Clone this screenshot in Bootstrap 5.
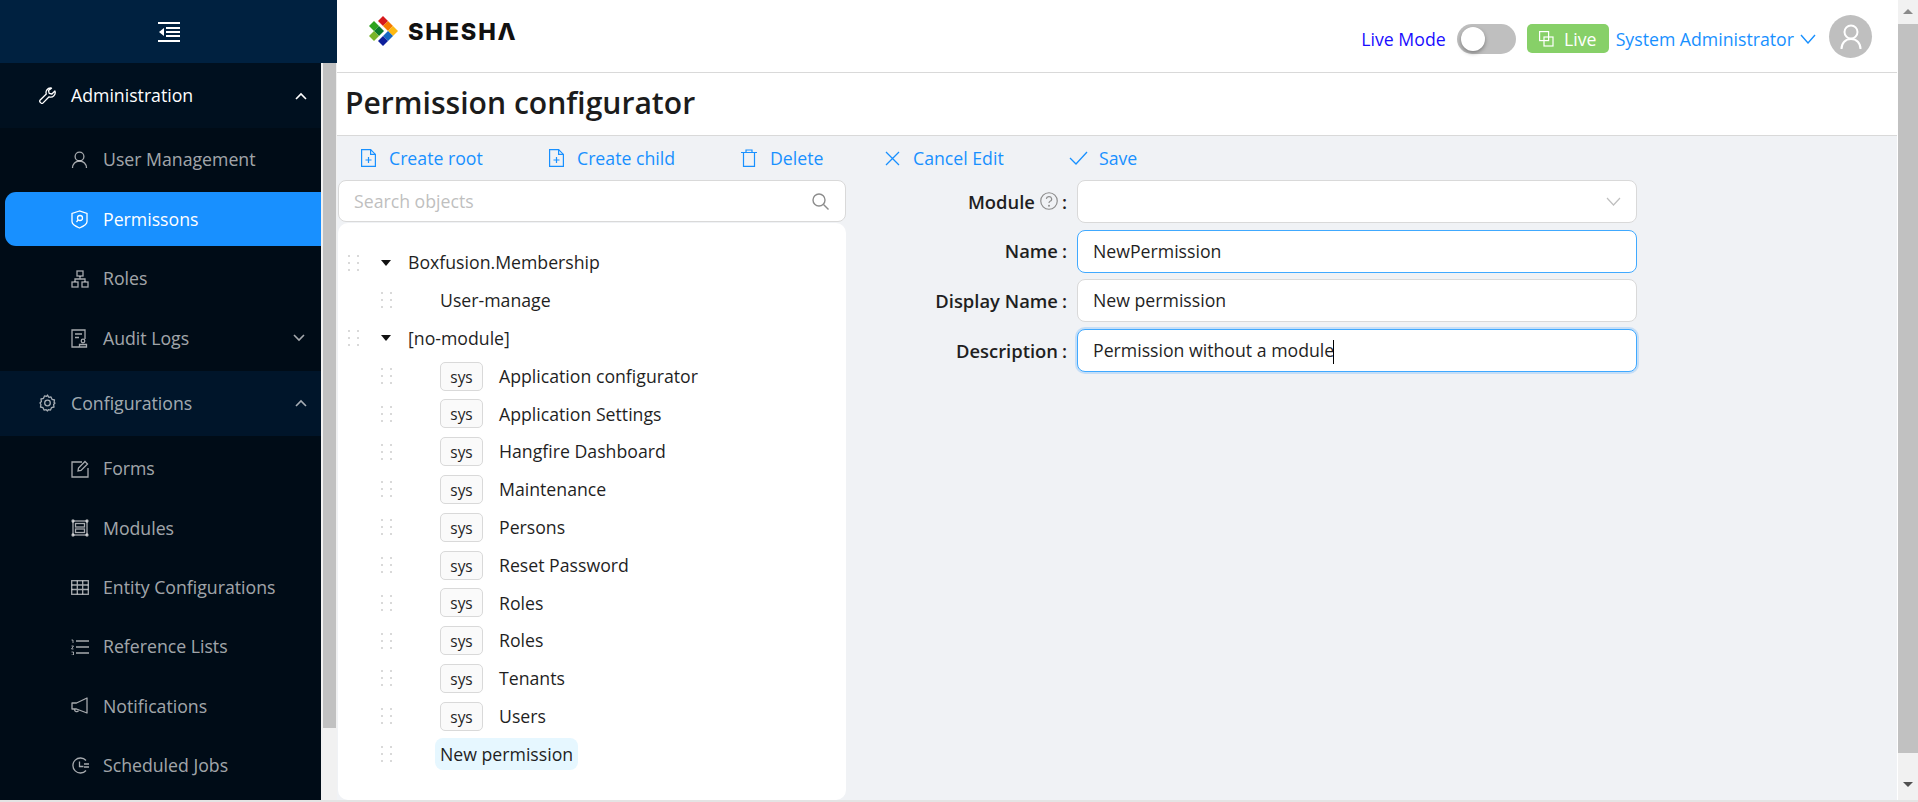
<!DOCTYPE html>
<html lang="en"><head><meta charset="utf-8"><title>Permission configurator</title>
<link href="https://cdn.jsdelivr.net/npm/bootstrap@5.3.0/dist/css/bootstrap.min.css" rel="stylesheet">
<style>
html,body{height:802px;overflow:hidden;}
body{font-family:"Open Sans","Noto Sans",sans-serif;font-size:17.7px;background:#f0f2f5;color:#1f1f1f;}
svg{display:block;flex:none;}
.shell{height:800px;}
.strip{height:2px;background:#e4e4e4;}
.side{width:321px;background:#000c17;color:rgba(255,255,255,.65);}
.side-top{height:63px;background:#002140;padding-left:16px;}
.side-title{height:65px;padding-left:39px;padding-right:14px;background:#00152a;gap:14px;}
.side-title.open{background:#00101f;color:#fff;}
.side-sub{padding-top:6px;padding-bottom:6px;gap:5.3px;}
.side-sub.first{padding-top:4.6px;padding-bottom:5.6px;gap:5.5px;}
.side-item{height:54px;margin-left:5px;padding-left:66px;gap:14px;border-radius:11px 0 0 11px;}
.side-item.on{background:#1890ff;color:#fff;}
.w17{margin-right:1px;}
.sbar{width:16px;background:#f1f1f1;}
.sbar-cap{height:63px;background:#002140;}
.sbar-thumb{width:13px;height:665px;margin-left:2px;background:#c1c1c1;}
.work{min-width:0;}
.top{height:73px;background:#fff;border-bottom:1px solid #d9d9d9;padding-left:31px;padding-right:25px;}
.brand-wrap{margin-bottom:9px;}
.right-wrap{padding-top:6px;margin-left:auto;}
.brand{font-family:Inter,sans-serif;font-weight:800;font-size:23.5px;letter-spacing:1.8px;color:#111;line-height:1;margin-left:9px;}
.live-label{color:#1a0dff;}
.knob-track{width:59px;height:30px;border-radius:15px;background:#bfbfbf;padding:3px 4px;margin:0 11px;}
.knob-track i{display:block;width:24px;height:24px;border-radius:50%;background:#fff;box-shadow:0 2px 4px rgba(0,0,0,.35);}
.live-tag{width:82px;height:29px;background:#87d068;color:#fff;border-radius:5px;gap:10px;}
.user-name{color:#1890ff;margin-left:7px;margin-right:13px;gap:6px;}
.avatar{width:43px;height:43px;border-radius:50%;background:#bfbfbf;margin-top:-4px;}
.head-title{height:64px;background:#fff;border-bottom:1px solid #d9d9d9;padding:0 0 2px 8px;font-size:30.1px;font-weight:600;color:#1c1c1c;}
.tools{height:44px;color:#1890ff;padding-left:24px;}
.tool{gap:13px;}
.tool.tight{gap:11px;}
.tool-a{width:188px;} .tool-b{width:192px;} .tool-c{width:144px;} .tool-d{width:184px;}
.left-col{width:508px;margin-left:1px;}
.search-box{height:42px;border:1px solid #d9d9d9;border-radius:8px;background:#fff;padding:0 16px 0 15px;color:#bfbfbf;margin-bottom:1px;}
.tree{height:577px;background:#fff;border-radius:10px;padding-top:20.8px;}
.tree-row{height:37.8px;}
.tree-row.root{padding-left:10px;}
.tree-row.leaf{padding-left:43px;}
.caret-dn{width:0;height:0;border-left:5px solid transparent;border-right:5px solid transparent;border-top:6px solid #111;margin-left:22px;margin-right:17px;}
.leaf .grip{margin-right:48px;}
.sys-tag{width:43px;height:29px;line-height:29px;text-align:center;border:1px solid #d9d9d9;border-radius:5px;background:#fafafa;margin-right:16px;font-size:15.4px;}
.picked{height:32px;line-height:32px;background:#e6f7ff;border-radius:8px;padding:0 5px;margin-left:-5px;}
.f-row{margin-bottom:6.7px;}
.f-label{width:231px;padding-right:10px;font-size:18.4px;font-weight:600;text-align:right;margin:0;}
.f-help{margin-left:5px;}
.form-control.f-input{width:560px;height:43px;border:1px solid #d9d9d9;border-radius:8px;padding:0 15px;font-size:inherit;color:#1f1f1f;background:#fff;line-height:41px;}
.form-control.f-input.hot{border-color:#40a9ff;}
.form-control.f-input.glow{border-color:#40a9ff;box-shadow:0 0 0 2px rgba(24,144,255,.2);}
.text-caret{display:inline-block;width:1px;height:24px;background:#000;vertical-align:middle;margin-left:-1px;}
.rbar{width:21px;background:#f1f1f1;border-left:1px solid #fff;}
.rbar .arrow-up{width:0;height:0;border-left:5px solid transparent;border-right:5px solid transparent;border-bottom:5px solid #8a8a8a;margin:9px auto 10px;}
.rbar .thumb{width:20px;height:729px;background:#c1c1c1;}
.rbar .arrow-dn{width:0;height:0;border-left:5px solid transparent;border-right:5px solid transparent;border-top:5px solid #505050;margin:29px auto 0;}
</style></head>
<body>
<svg width="0" height="0" class="position-absolute"><defs>
<g id="dots" fill="#d9d9d9"><rect width="2" height="2"/><rect x="9" width="2" height="2"/><rect y="7" width="2" height="2"/><rect x="9" y="7" width="2" height="2"/><rect y="14" width="2" height="2"/><rect x="9" y="14" width="2" height="2"/></g>
</defs></svg>
<div class="shell d-flex">
  <aside class="side flex-shrink-0 d-flex flex-column overflow-hidden">
    <div class="side-top d-flex align-items-center justify-content-center">
      <svg width="22" height="20" viewBox="0 0 22 20" fill="#fff"><rect x="0" y="0" width="22" height="2"/><rect x="8" y="5" width="14" height="2"/><rect x="8" y="9" width="14" height="2"/><rect x="8" y="13" width="14" height="2"/><rect x="0" y="18" width="22" height="2"/><path d="M1 10l5-4v8z"/></svg>
    </div>
    <div class="side-title open d-flex align-items-center">
      <svg class="w17" width="17" height="17" viewBox="0 0 17 17" fill="none" stroke="#fff" stroke-width="1.3" stroke-linejoin="round"><path d="M11.500 1a4.500 4.500 0 0 0-4.200 6L1.200 13a1.600 1.600 0 0 0 0 2.200l.7.7a1.600 1.600 0 0 0 2.200 0l6-6.100A4.500 4.500 0 0 0 15.900 4l-3 3-2.700-.7-.7-2.700 3-2.400z"/></svg>
      <span>Administration</span>
      <svg class="ms-auto" width="12" height="8" viewBox="0 0 12 8" fill="none" stroke="#fff" stroke-width="1.6"><path d="M1 7l5-5 5 5"/></svg>
    </div>
    <div class="side-sub first d-flex flex-column">
      <div class="side-item d-flex align-items-center">
        <svg class="w17" width="17" height="18" viewBox="0 0 17 18" fill="none" stroke="currentColor" stroke-width="1.3"><circle cx="8.5" cy="5.5" r="4.4"/><path d="M1.500 17c0-4 3-7 7-7s7 3 7 7"/></svg>
        <span>User Management</span>
      </div>
      <div class="side-item on d-flex align-items-center">
        <svg class="w17" width="17" height="19" viewBox="0 0 17 19" fill="none" stroke="currentColor" stroke-width="1.3"><path d="M8.500 1L1 3.400v8.200c0 2.400 4 5 7.500 6.400 3.500-1.400 7.500-4 7.500-6.400V3.400z"/><circle cx="9" cy="8" r="2.500"/><path d="M7 10l-1.500 2"/></svg>
        <span>Permissons</span>
      </div>
      <div class="side-item d-flex align-items-center">
        <svg width="18" height="18" viewBox="0 0 18 18" fill="none" stroke="currentColor" stroke-width="1.300"><rect x="6" y="1" width="6" height="5"/><rect x="1" y="12" width="6" height="5"/><rect x="11" y="12" width="6" height="5"/><path d="M9 6v3M4 12V9h10v3"/></svg>
        <span>Roles</span>
      </div>
      <div class="side-item d-flex align-items-center">
        <svg class="w17" width="17" height="19" viewBox="0 0 17 19" fill="none" stroke="currentColor" stroke-width="1.300"><path d="M8 18H1V1h13v9"/><path d="M4 5h7M4 8.500h4"/><circle cx="12" cy="12" r="1.800"/><path d="M8.500 18v-2.500h7V18z"/></svg>
        <span>Audit Logs</span>
        <svg class="ms-auto me-3" width="12" height="8" viewBox="0 0 12 8" fill="none" stroke="currentColor" stroke-width="1.600"><path d="M1 1l5 5 5-5"/></svg>
      </div>
    </div>
    <div class="side-title d-flex align-items-center">
      <svg class="w17" width="17" height="18" viewBox="0 0 17 18" fill="none" stroke="currentColor" stroke-width="1.300" stroke-linejoin="round"><path d="M8.500 1l1.300 2.300 2.200-.4 1 2.400 2.500.7-.4 2.500L16 9l-1.400 1.500.4 2.500-2.500.7-1 2.400-2.200-.4L8.500 17l-1.300-1.300-2.200.4-1-2.400-2.500-.7.4-2.500L1 9l1.400-1.500L2 5l2.500-.7 1-2.400 2.200.4z"/><circle cx="8.500" cy="9" r="2.800"/></svg>
      <span>Configurations</span>
      <svg class="ms-auto" width="12" height="8" viewBox="0 0 12 8" fill="none" stroke="currentColor" stroke-width="1.600"><path d="M1 7l5-5 5 5"/></svg>
    </div>
    <div class="side-sub d-flex flex-column">
      <div class="side-item d-flex align-items-center">
        <svg width="18" height="18" viewBox="0 0 18 18" fill="none" stroke="currentColor" stroke-width="1.300"><path d="M11 2H1v15h16V8"/><path d="M7 11l.5-3L14 1.500l2.500 2.500L10 10.500z"/></svg>
        <span>Forms</span>
      </div>
      <div class="side-item d-flex align-items-center">
        <svg width="18" height="18" viewBox="0 0 18 18" fill="none" stroke="currentColor" stroke-width="1.300"><rect x="2" y="2" width="14" height="14"/><rect x="4.500" y="4.500" width="9" height="3.500"/><rect x="4.500" y="10" width="9" height="3.500"/><circle cx="2" cy="2" r="1"/><circle cx="16" cy="2" r="1"/><circle cx="2" cy="16" r="1"/><circle cx="16" cy="16" r="1"/></svg>
        <span>Modules</span>
      </div>
      <div class="side-item d-flex align-items-center">
        <svg width="18" height="15" viewBox="0 0 18 15" fill="none" stroke="currentColor" stroke-width="1.300"><rect x=".7" y=".7" width="16.600" height="13.600"/><path d="M.7 5h16.600M.7 9.500h16.600M6.300.7v13.600M11.700.7v13.600"/></svg>
        <span>Entity Configurations</span>
      </div>
      <div class="side-item d-flex align-items-center">
        <svg width="18" height="16" viewBox="0 0 18 16" fill="none" stroke="currentColor" stroke-width="1.300"><path d="M5 2h13M5 8h13M5 14h13"/><path d="M.5 1h1.500v3M.5 7h2L.5 10h2M.5 13h2v3h-2" stroke-width=".9"/></svg>
        <span>Reference Lists</span>
      </div>
      <div class="side-item d-flex align-items-center">
        <svg class="w17" width="17" height="17" viewBox="0 0 17 17" fill="none" stroke="currentColor" stroke-width="1.300" stroke-linejoin="round"><path d="M16 1v15L5.500 12H1V6h4.500z"/><path d="M3.500 12.500a2.200 2.200 0 0 0 4 1.200"/></svg>
        <span>Notifications</span>
      </div>
      <div class="side-item d-flex align-items-center">
        <svg width="18" height="17" viewBox="0 0 18 17" fill="none" stroke="currentColor" stroke-width="1.300"><path d="M15 3.500A7.500 7.500 0 1 0 15 13.500"/><path d="M8.500 4.500v5h4M13 7h5M13 10h5"/></svg>
        <span>Scheduled Jobs</span>
      </div>
    </div>
  </aside>
  <div class="sbar flex-shrink-0"><div class="sbar-cap"></div><div class="sbar-thumb"></div></div>
  <main class="work flex-grow-1 d-flex flex-column">
    <header class="top d-flex align-items-center">
      <div class="brand-wrap d-flex align-items-center">
        <svg width="31" height="30" viewBox="0 0 31 30">
          <path fill="#d7191c" d="M15 0l5 5-5 5-5-5z"/><path fill="#f57c00" d="M20 5l5 5-5 5-5-5z"/><path fill="#fdb913" d="M25 10l5 5-5 5-5-5z"/>
          <path fill="#1565c0" d="M20 15l5 5-5 5-5-5z"/><path fill="#0d1f9c" d="M15 20l5 5-5 5-5-5z"/>
          <path fill="#2ea31f" d="M6 5l5 5-5 5-5-5z"/><path fill="#0c7a2c" d="M11 10l5 5-5 5-5-5z"/><path fill="#7ab42c" d="M6 15l5 5-5 5-5-5z"/>
        </svg>
        <span class="brand">SHESHΛ</span>
      </div>
      <div class="right-wrap d-flex align-items-center">
        <span class="live-label">Live Mode</span>
        <div class="knob-track"><i></i></div>
        <div class="live-tag d-flex align-items-center justify-content-center">
          <svg width="15" height="16" viewBox="0 0 15 16" fill="none" stroke="#fff" stroke-width="1.200"><rect x=".6" y=".6" width="9" height="9"/><rect x="5" y="6" width="9" height="9"/></svg>
          <span>Live</span>
        </div>
        <div class="user-name d-flex align-items-center">
          <span>System Administrator</span>
          <svg width="16" height="10" viewBox="0 0 16 10" fill="none" stroke="#1890ff" stroke-width="1.400"><path d="M1 1l7 8 7-8"/></svg>
        </div>
        <div class="avatar d-flex align-items-center justify-content-center">
          <svg width="22" height="26" viewBox="0 0 22 26" fill="none" stroke="#fff" stroke-width="2"><circle cx="11" cy="8" r="6.500"/><path d="M1.500 25c0-6 4-10 9.500-10s9.500 4 9.500 10"/></svg>
        </div>
      </div>
    </header>
    <div class="head-title d-flex align-items-center">Permission configurator</div>
    <div class="tools d-flex align-items-center">
      <div class="tool tool-a d-flex align-items-center">
        <svg width="15" height="18" viewBox="0 0 15 18" fill="none" stroke="#1890ff" stroke-width="1.200"><path d="M.6.6h9l4.800 4.800V17.400H.6z"/><path d="M9.600.6v4.800h4.800M7.500 8v6M4.500 11h6"/></svg>
        <span>Create root</span>
      </div>
      <div class="tool tool-b d-flex align-items-center">
        <svg width="15" height="18" viewBox="0 0 15 18" fill="none" stroke="#1890ff" stroke-width="1.200"><path d="M.6.6h9l4.800 4.800V17.400H.6z"/><path d="M9.600.6v4.800h4.800M7.500 8v6M4.500 11h6"/></svg>
        <span>Create child</span>
      </div>
      <div class="tool tool-c d-flex align-items-center">
        <svg width="16" height="18" viewBox="0 0 16 18" fill="none" stroke="#1890ff" stroke-width="1.200"><path d="M0 3.500h16M5 3.500V1h6v2.500M2.500 3.500v13.900h11V3.500"/></svg>
        <span>Delete</span>
      </div>
      <div class="tool tool-d d-flex align-items-center">
        <svg width="15" height="15" viewBox="0 0 15 15" fill="none" stroke="#1890ff" stroke-width="1.300"><path d="M1 1l13 13M14 1L1 14"/></svg>
        <span>Cancel Edit</span>
      </div>
      <div class="tool tight d-flex align-items-center">
        <svg width="19" height="14" viewBox="0 0 19 14" fill="none" stroke="#1890ff" stroke-width="1.300"><path d="M1 7l6 6L18 1"/></svg>
        <span>Save</span>
      </div>
    </div>
    <div class="d-flex flex-grow-1">
      <div class="left-col flex-shrink-0">
        <div class="search-box d-flex align-items-center justify-content-between">
          <span>Search objects</span>
          <svg width="17" height="17" viewBox="0 0 17 17" fill="none" stroke="#8c8c8c" stroke-width="1.400"><circle cx="7" cy="7" r="6"/><path d="M11.500 11.500L16.500 16.500"/></svg>
        </div>
        <div class="tree">
          <div class="tree-row root d-flex align-items-center"><svg class="grip" width="11" height="16"><use href="#dots"/></svg><span class="caret-dn"></span><span>Boxfusion.Membership</span></div>
          <div class="tree-row leaf d-flex align-items-center"><svg class="grip" width="11" height="16"><use href="#dots"/></svg><span>User-manage</span></div>
          <div class="tree-row root d-flex align-items-center"><svg class="grip" width="11" height="16"><use href="#dots"/></svg><span class="caret-dn"></span><span>[no-module]</span></div>
          <div class="tree-row leaf d-flex align-items-center"><svg class="grip" width="11" height="16"><use href="#dots"/></svg><span class="sys-tag">sys</span><span>Application configurator</span></div>
          <div class="tree-row leaf d-flex align-items-center"><svg class="grip" width="11" height="16"><use href="#dots"/></svg><span class="sys-tag">sys</span><span>Application Settings</span></div>
          <div class="tree-row leaf d-flex align-items-center"><svg class="grip" width="11" height="16"><use href="#dots"/></svg><span class="sys-tag">sys</span><span>Hangfire Dashboard</span></div>
          <div class="tree-row leaf d-flex align-items-center"><svg class="grip" width="11" height="16"><use href="#dots"/></svg><span class="sys-tag">sys</span><span>Maintenance</span></div>
          <div class="tree-row leaf d-flex align-items-center"><svg class="grip" width="11" height="16"><use href="#dots"/></svg><span class="sys-tag">sys</span><span>Persons</span></div>
          <div class="tree-row leaf d-flex align-items-center"><svg class="grip" width="11" height="16"><use href="#dots"/></svg><span class="sys-tag">sys</span><span>Reset Password</span></div>
          <div class="tree-row leaf d-flex align-items-center"><svg class="grip" width="11" height="16"><use href="#dots"/></svg><span class="sys-tag">sys</span><span>Roles</span></div>
          <div class="tree-row leaf d-flex align-items-center"><svg class="grip" width="11" height="16"><use href="#dots"/></svg><span class="sys-tag">sys</span><span>Roles</span></div>
          <div class="tree-row leaf d-flex align-items-center"><svg class="grip" width="11" height="16"><use href="#dots"/></svg><span class="sys-tag">sys</span><span>Tenants</span></div>
          <div class="tree-row leaf d-flex align-items-center"><svg class="grip" width="11" height="16"><use href="#dots"/></svg><span class="sys-tag">sys</span><span>Users</span></div>
          <div class="tree-row leaf d-flex align-items-center"><svg class="grip" width="11" height="16"><use href="#dots"/></svg><span class="picked">New permission</span></div>
        </div>
      </div>
      <form>
        <div class="f-row d-flex align-items-center">
          <label class="f-label d-flex align-items-center justify-content-end">Module<svg class="f-help" width="18" height="18" viewBox="0 0 17 17" fill="none" stroke="#8c8c8c" stroke-width="1.100"><circle cx="8.500" cy="8.500" r="7.800"/><path d="M6 6.500a2.500 2.300 0 1 1 3.500 2.300c-.7.300-1 .7-1 1.700"/><circle cx="8.500" cy="13" r=".4"/></svg><span class="ms-1">:</span></label>
          <div class="form-control f-input d-flex align-items-center justify-content-end"><svg width="15" height="9" viewBox="0 0 15 9" fill="none" stroke="#bfbfbf" stroke-width="1.200"><path d="M1 1l6.500 7L14 1"/></svg></div>
        </div>
        <div class="f-row d-flex align-items-center">
          <label class="f-label">Name<span class="ms-1">:</span></label>
          <div class="form-control f-input hot">NewPermission</div>
        </div>
        <div class="f-row d-flex align-items-center">
          <label class="f-label">Display Name<span class="ms-1">:</span></label>
          <div class="form-control f-input">New permission</div>
        </div>
        <div class="f-row d-flex align-items-center">
          <label class="f-label">Description<span class="ms-1">:</span></label>
          <div class="form-control f-input glow">Permission without a module<span class="text-caret"></span></div>
        </div>
      </form>
    </div>
  </main>
  <div class="rbar flex-shrink-0">
    <div class="arrow-up"></div>
    <div class="thumb"></div>
    <div class="arrow-dn"></div>
  </div>
</div>
<div class="strip"></div>
<script src="https://cdn.jsdelivr.net/npm/bootstrap@5.3.0/dist/js/bootstrap.bundle.min.js"></script>
</body></html>
